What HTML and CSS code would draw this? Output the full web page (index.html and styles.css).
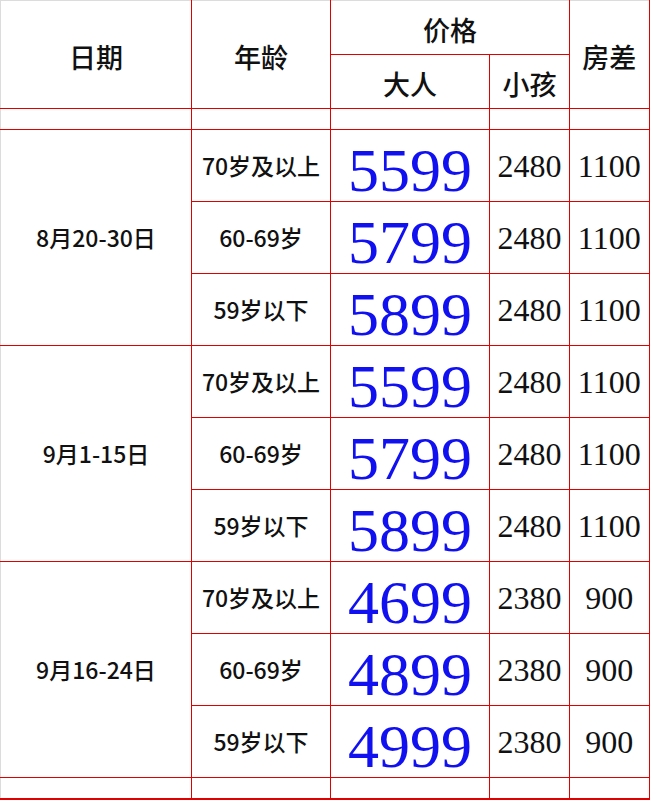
FILE: index.html
```html
<!DOCTYPE html>
<html lang="zh">
<head>
<meta charset="utf-8">
<title>价格表</title>
<link rel="stylesheet" href="styles.css">
</head>
<body>
<table class="price">
  <colgroup>
    <col class="c-date"><col class="c-age"><col class="c-adult"><col class="c-kid"><col class="c-room">
  </colgroup>
  <tr class="h1">
    <td class="head first top" rowspan="2">日期</td>
    <td class="head top" rowspan="2">年龄</td>
    <td class="head top" colspan="2">价格</td>
    <td class="head top last" rowspan="2">房差</td>
  </tr>
  <tr class="h2">
    <td class="head">大人</td>
    <td class="head">小孩</td>
  </tr>
  <tr class="spacer"><td class="first"></td><td></td><td></td><td></td><td class="last"></td></tr>

  <tr class="row">
    <td class="date first" rowspan="3">8月20-30日</td>
    <td class="age">70岁及以上</td><td class="big">5599</td><td class="num">2480</td><td class="num last">1100</td>
  </tr>
  <tr class="row"><td class="age">60-69岁</td><td class="big">5799</td><td class="num">2480</td><td class="num last">1100</td></tr>
  <tr class="row"><td class="age">59岁以下</td><td class="big">5899</td><td class="num">2480</td><td class="num last">1100</td></tr>

  <tr class="row">
    <td class="date first" rowspan="3">9月1-15日</td>
    <td class="age">70岁及以上</td><td class="big">5599</td><td class="num">2480</td><td class="num last">1100</td>
  </tr>
  <tr class="row"><td class="age">60-69岁</td><td class="big">5799</td><td class="num">2480</td><td class="num last">1100</td></tr>
  <tr class="row"><td class="age">59岁以下</td><td class="big">5899</td><td class="num">2480</td><td class="num last">1100</td></tr>

  <tr class="row">
    <td class="date first" rowspan="3">9月16-24日</td>
    <td class="age">70岁及以上</td><td class="big">4699</td><td class="num">2380</td><td class="num last">900</td>
  </tr>
  <tr class="row"><td class="age">60-69岁</td><td class="big">4899</td><td class="num">2380</td><td class="num last">900</td></tr>
  <tr class="row"><td class="age">59岁以下</td><td class="big">4999</td><td class="num">2380</td><td class="num last">900</td></tr>

  <tr class="spacer end"><td class="first"></td><td></td><td></td><td></td><td class="last"></td></tr>
</table>
</body>
</html>
```
FILE: styles.css
```css
html, body {
  margin: 0;
  padding: 0;
  background: #ffffff;
}

.price {
  border-collapse: collapse;
  table-layout: fixed;
  width: 649px;
  font-family: "Noto Sans CJK SC", "Liberation Serif", serif;
  color: #111111;
}

.c-date { width: 191px; }
.c-age { width: 139px; }
.c-adult { width: 159px; }
.c-kid { width: 80px; }
.c-room { width: 80px; }

.price td {
  border: 1px solid #e00000;
  padding: 0;
  text-align: center;
  vertical-align: middle;
  white-space: nowrap;
}

.price td.first { border-left: 1px solid #dcdcdc; }
.price td.top { border-top: 1px solid #dcdcdc; }
.price td.last { border-right: 2px solid #e00000; }
.price .end td { border-bottom: 2px solid #e00000; }

.h1 { height: 54px; }
.h2 { height: 54px; }
.spacer { height: 21px; }
.row { height: 72px; }

.head {
  font-size: 27px;
  font-weight: 500;
  line-height: 1;
  padding-top: 4px !important;
}

.date, .age {
  font-size: 23px;
  font-weight: 500;
  line-height: 1;
}

.big {
  font-family: "Liberation Serif", serif;
  font-size: 62px;
  line-height: 1;
  color: #1010f0;
  padding-top: 8px !important;
}

.num {
  font-family: "Liberation Serif", serif;
  font-size: 32px;
  line-height: 1;
}
```
